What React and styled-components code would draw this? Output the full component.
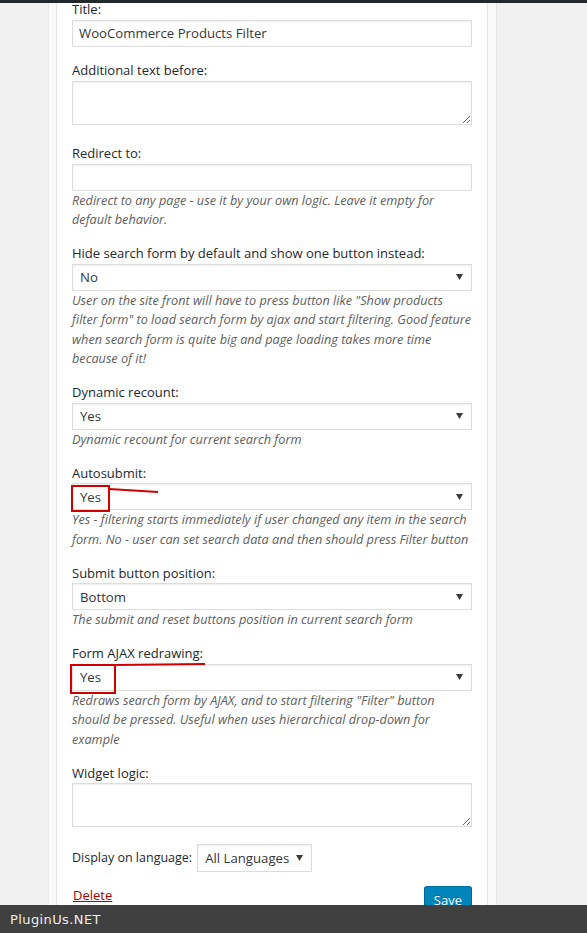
import styled, { createGlobalStyle } from "styled-components";

const GlobalStyle = createGlobalStyle`
  html, body {
    margin: 0;
    padding: 0;
  }
  body {
    background: #f1f1f1;
    font-family: "Open Sans", "Noto Sans", sans-serif;
    color: #23282d;
  }
`;

const AdminBar = styled.div`
  position: fixed;
  top: 0;
  left: 0;
  right: 0;
  height: 3px;
  background: #23282d;
  z-index: 10;
`;

const Page = styled.div`
  display: flex;
  min-height: 100vh;
  padding-left: 48px;
`;

const Holder = styled.div`
  width: 449px;
  box-sizing: border-box;
  padding: 0 8px 0 7px;
  background: #f9f9f9;
  border-left: 1px solid #ebebeb;
  border-right: 1px solid #e5e5e5;
  display: flex;
`;

const Widget = styled.div`
  position: relative;
  width: 432px;
  box-sizing: border-box;
  padding: 0 15px 40px;
  background: #fff;
  border-left: 1px solid #e5e5e5;
  border-right: 1px solid #e5e5e5;
`;

const Field = styled.div`
  padding-bottom: ${(p) => p.$gap || "14.5px"};
`;

const Label = styled.label`
  display: block;
  font-size: ${(p) => p.$size || "13px"};
  line-height: 19.5px;
  color: #23282d;
`;

const TextInput = styled.input`
  display: block;
  box-sizing: border-box;
  width: 100%;
  height: 27px;
  margin: 0;
  padding: 0 6px;
  border: 1px solid #ddd;
  box-shadow: inset 0 1px 2px rgba(0, 0, 0, 0.07);
  background: #fff;
  font-family: "Open Sans", sans-serif;
  font-size: 13.2px;
  color: #32373c;
  outline: none;
`;

const TextArea = styled.textarea`
  display: block;
  box-sizing: border-box;
  width: 100%;
  height: 44px;
  margin: 0;
  padding: 4px 6px;
  border: 1px solid #ddd;
  box-shadow: inset 0 1px 2px rgba(0, 0, 0, 0.07);
  background: #fff;
  font-family: "Open Sans", sans-serif;
  font-size: 13.2px;
  resize: vertical;
  outline: none;
`;

const SelectBox = styled.div`
  position: relative;
  display: flex;
  align-items: center;
  justify-content: space-between;
  box-sizing: border-box;
  width: ${(p) => p.$width || "100%"};
  height: ${(p) => p.$height || "27px"};
  padding: 0 8px 0 7px;
  border: 1px solid #ddd;
  box-shadow: inset 0 1px 2px rgba(0, 0, 0, 0.07);
  background: #fff;
  font-size: 13.2px;
  color: #32373c;
`;

const Caret = styled.svg`
  width: 7px;
  height: 6px;
  fill: #3c3c3c;
  flex: none;
`;

const Mark = styled.svg`
  position: absolute;
  left: 0;
  top: 0;
  width: 1px;
  height: 1px;
  overflow: visible;
  pointer-events: none;
`;

const Desc = styled.p`
  margin: 0;
  font-size: 12.7px;
  font-style: italic;
  line-height: 19.5px;
  color: #606060;
  white-space: nowrap;
`;

const LangRow = styled.div`
  display: flex;
  align-items: center;
  gap: 5px;
`;

const Footer = styled.div`
  display: flex;
  justify-content: space-between;
  align-items: flex-start;
  margin-top: 14px;
`;

const DeleteLink = styled.a`
  font-size: 13px;
  line-height: 19.5px;
  color: #a00;
  text-decoration: underline;
  margin-left: 1px;
`;

const SaveButton = styled.button`
  height: 28px;
  padding: 0 9px;
  background: #0085ba;
  border: 1px solid;
  border-color: #0073aa #006799 #006799;
  border-radius: 3px;
  box-shadow: 0 1px 0 #006799;
  color: #fff;
  font-family: "Open Sans", sans-serif;
  font-size: 13px;
  text-shadow: 0 -1px 1px #006799;
`;

const BrandBar = styled.div`
  position: fixed;
  left: 0;
  right: 0;
  bottom: 0;
  height: 28px;
  display: flex;
  align-items: center;
  padding-left: 10px;
  background: #404040;
  color: #eee;
  font-family: "DejaVu Sans", sans-serif;
  font-size: 13px;
  letter-spacing: 0.4px;
  z-index: 10;
`;

const Select = ({ value, mark, width, height }) => (
  <SelectBox $width={width} $height={height}>
    <span>{value}</span>
    <Caret viewBox="0 0 7 6">
      <path d="M0 0 H7 L3.5 6 Z" />
    </Caret>
    {mark && (
      <Mark>
        <rect
          x={mark.x}
          y={mark.y}
          width={mark.w}
          height={mark.h}
          fill="none"
          stroke="#d10000"
          strokeWidth="2"
        />
        <line
          x1={mark.line[0]}
          y1={mark.line[1]}
          x2={mark.line[2]}
          y2={mark.line[3]}
          stroke="#d10000"
          strokeWidth="2"
        />
      </Mark>
    )}
  </SelectBox>
);

const selects = [
  {
    label: "Hide search form by default and show one button instead:",
    value: "No",
    desc: [
      'User on the site front will have to press button like "Show products',
      'filter form" to load search form by ajax and start filtering. Good feature',
      "when search form is quite big and page loading takes more time",
      "because of it!",
    ],
  },
  {
    label: "Dynamic recount:",
    value: "Yes",
    desc: ["Dynamic recount for current search form"],
  },
  {
    label: "Autosubmit:",
    value: "Yes",
    mark: { x: -1, y: 2, w: 37, h: 25, line: [36, 5, 85, 8] },
    desc: [
      "Yes - filtering starts immediately if user changed any item in the search",
      "form. No - user can set search data and then should press Filter button",
    ],
  },
  {
    label: "Submit button position:",
    value: "Bottom",
    desc: ["The submit and reset buttons position in current search form"],
  },
  {
    label: "Form AJAX redrawing:",
    value: "Yes",
    mark: { x: -2, y: 0, w: 44, h: 28, line: [42, 0, 132, -1] },
    desc: [
      'Redraws search form by AJAX, and to start filtering "Filter" button',
      "should be pressed. Useful when uses hierarchical drop-down for",
      "example",
    ],
  },
];

const Lines = ({ lines }) => (
  <Desc>
    {lines.map((l, i) => (
      <span key={i}>
        {l}
        {i < lines.length - 1 && <br />}
      </span>
    ))}
  </Desc>
);

export default function App() {
  return (
    <>
      <GlobalStyle />
      <AdminBar />
      <Page>
        <Holder>
          <Widget>
            <Field>
              <Label>Title:</Label>
              <TextInput defaultValue="WooCommerce Products Filter" />
            </Field>
            <Field $gap="19.5px">
              <Label>Additional text before:</Label>
              <TextArea />
            </Field>
            <Field>
              <Label>Redirect to:</Label>
              <TextInput />
              <Lines
                lines={[
                  "Redirect to any page - use it by your own logic. Leave it empty for",
                  "default behavior.",
                ]}
              />
            </Field>
            {selects.map((s) => (
              <Field key={s.label}>
                <Label>{s.label}</Label>
                <Select value={s.value} mark={s.mark} />
                <Lines lines={s.desc} />
              </Field>
            ))}
            <Field $gap="16.5px">
              <Label>Widget logic:</Label>
              <TextArea />
            </Field>
            <LangRow>
              <Label as="span" $size="12.5px">
                Display on language:
              </Label>
              <Select value="All Languages" width="115px" height="28px" />
            </LangRow>
            <Footer>
              <DeleteLink href="#">Delete</DeleteLink>
              <SaveButton>Save</SaveButton>
            </Footer>
          </Widget>
        </Holder>
      </Page>
      <BrandBar>PluginUs.NET</BrandBar>
    </>
  );
}
